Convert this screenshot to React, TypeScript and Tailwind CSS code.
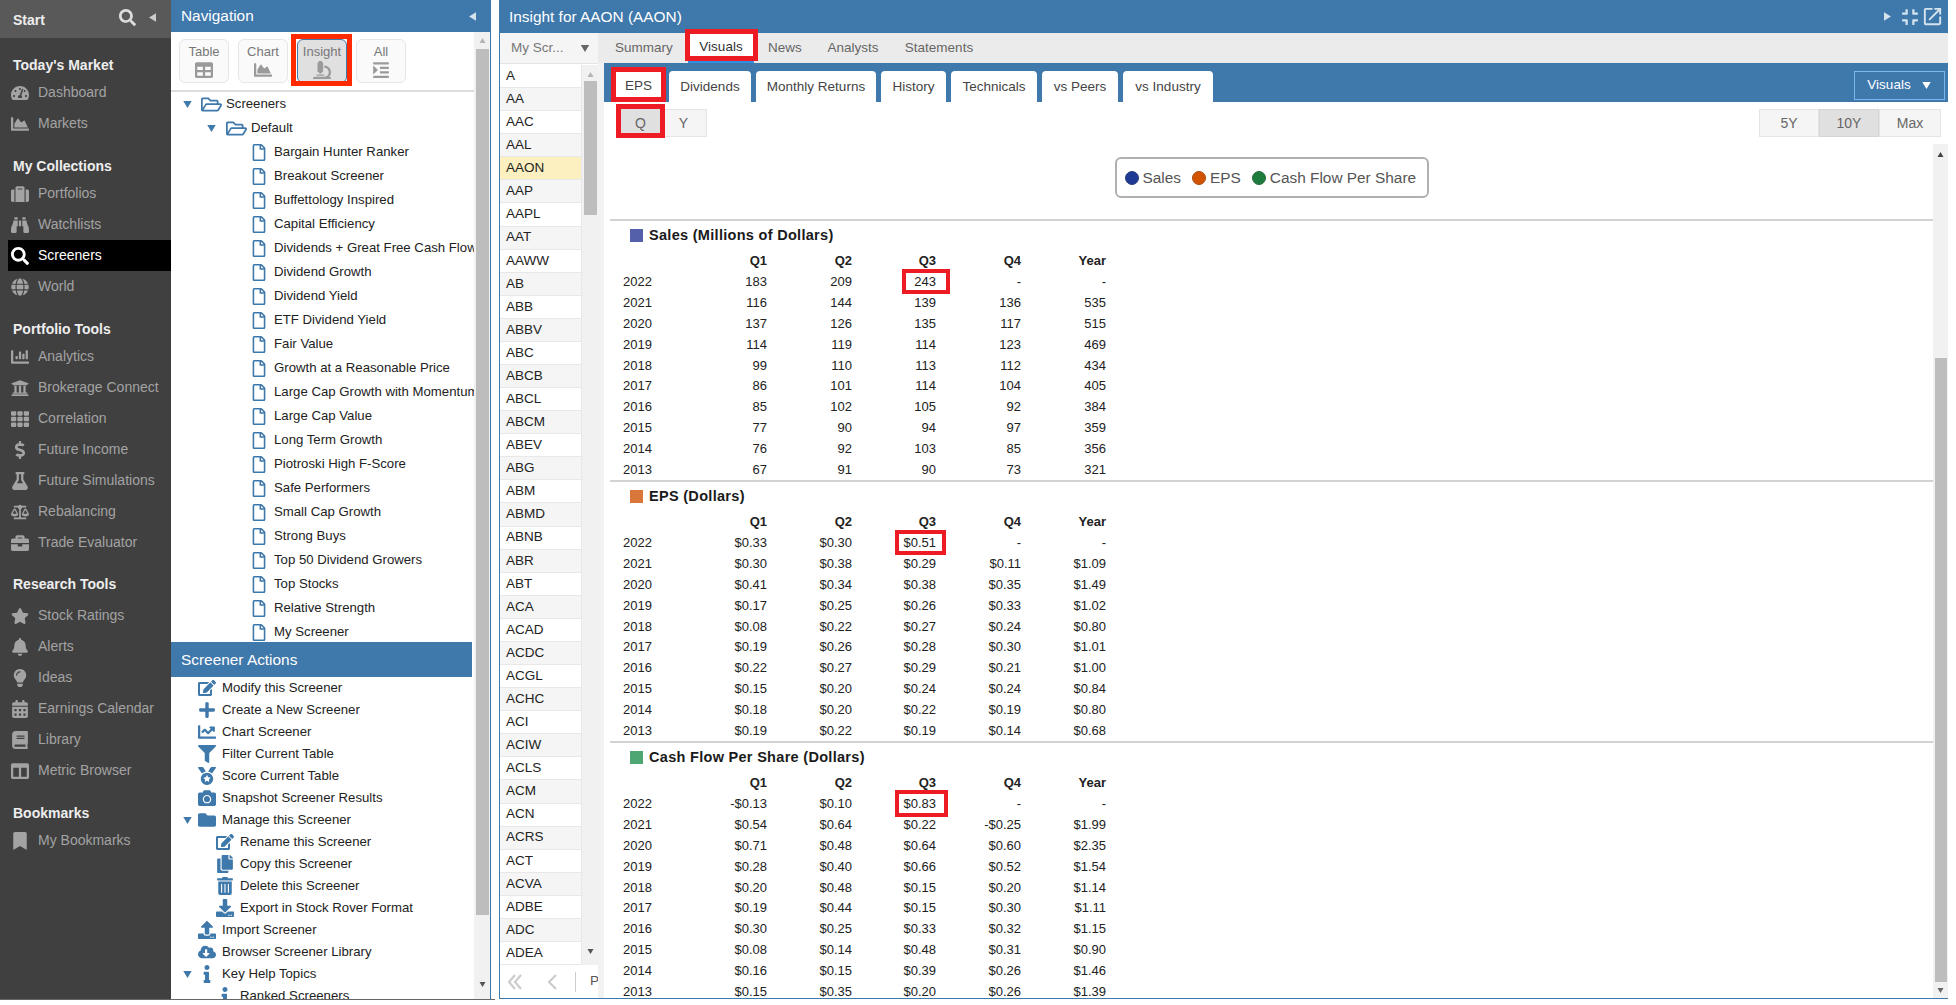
import React from "react";
import {
  FaTachometerAlt, FaChartArea, FaSuitcase, FaBinoculars, FaSearch, FaGlobe, FaChartBar, FaUniversity, FaTh,
  FaDollarSign, FaFlask, FaBalanceScale, FaBriefcase, FaStar, FaBell, FaLightbulb, FaCalendarAlt, FaBook, FaColumns,
  FaBookmark, FaEdit, FaPlus, FaChartLine, FaFilter, FaMedal, FaCamera, FaFolder, FaCopy, FaTrashAlt, FaDownload,
  FaUpload, FaCloudDownloadAlt, FaInfo, FaRegFolderOpen, FaRegFile, FaMicroscope, FaIndent, FaTable, FaCompress,
} from "react-icons/fa";
import { MdOpenInNew } from "react-icons/md";

type Ic = React.ComponentType<{ className?: string }>;

function Tri({ dir, className }: { dir: "up" | "down" | "left" | "right"; className?: string }) {
  const pts = { up: "0,10 6,0 12,10", down: "0,0 12,0 6,10", left: "10,0 10,12 0,6", right: "0,0 0,12 10,6" }[dir];
  const vb = dir === "up" || dir === "down" ? "0 0 12 10" : "0 0 10 12";
  return (
    <svg viewBox={vb} className={className} fill="currentColor">
      <polygon points={pts} />
    </svg>
  );
}

const sideSections: { title: string; cls: string; rows: [string, Ic, boolean?][] }[] = [
  { title: "Today's Market", cls: "mt-[15px] h-6", rows: [["Dashboard", FaTachometerAlt], ["Markets", FaChartArea]] },
  {
    title: "My Collections", cls: "mt-[15px] h-6",
    rows: [["Portfolios", FaSuitcase], ["Watchlists", FaBinoculars], ["Screeners", FaSearch, true], ["World", FaGlobe]],
  },
  {
    title: "Portfolio Tools", cls: "mt-[15px] h-6",
    rows: [["Analytics", FaChartBar], ["Brokerage Connect", FaUniversity], ["Correlation", FaTh], ["Future Income", FaDollarSign], ["Future Simulations", FaFlask], ["Rebalancing", FaBalanceScale], ["Trade Evaluator", FaBriefcase]],
  },
  {
    title: "Research Tools", cls: "mt-[14px] h-7",
    rows: [["Stock Ratings", FaStar], ["Alerts", FaBell], ["Ideas", FaLightbulb], ["Earnings Calendar", FaCalendarAlt], ["Library", FaBook], ["Metric Browser", FaColumns]],
  },
  { title: "Bookmarks", cls: "mt-[15px] h-6", rows: [["My Bookmarks", FaBookmark]] },
];

const leaves = ["Bargain Hunter Ranker", "Breakout Screener", "Buffettology Inspired", "Capital Efficiency", "Dividends + Great Free Cash Flow", "Dividend Growth", "Dividend Yield", "ETF Dividend Yield", "Fair Value", "Growth at a Reasonable Price", "Large Cap Growth with Momentum", "Large Cap Value", "Long Term Growth", "Piotroski High F-Score", "Safe Performers", "Small Cap Growth", "Strong Buys", "Top 50 Dividend Growers", "Top Stocks", "Relative Strength", "My Screener"];

const actions: { t: string; I: Ic; sub?: boolean; caret?: boolean; ic?: string }[] = [
  { t: "Modify this Screener", I: FaEdit },
  { t: "Create a New Screener", I: FaPlus },
  { t: "Chart Screener", I: FaChartLine },
  { t: "Filter Current Table", I: FaFilter },
  { t: "Score Current Table", I: FaMedal },
  { t: "Snapshot Screener Results", I: FaCamera },
  { t: "Manage this Screener", I: FaFolder, caret: true },
  { t: "Rename this Screener", I: FaEdit, sub: true },
  { t: "Copy this Screener", I: FaCopy, sub: true },
  { t: "Delete this Screener", I: FaTrashAlt, sub: true },
  { t: "Export in Stock Rover Format", I: FaDownload, sub: true },
  { t: "Import Screener", I: FaUpload },
  { t: "Browser Screener Library", I: FaCloudDownloadAlt },
  { t: "Key Help Topics", I: FaInfo, caret: true },
  { t: "Ranked Screeners", I: FaInfo, sub: true },
];

const tickers = ["A", "AA", "AAC", "AAL", "AAON", "AAP", "AAPL", "AAT", "AAWW", "AB", "ABB", "ABBV", "ABC", "ABCB", "ABCL", "ABCM", "ABEV", "ABG", "ABM", "ABMD", "ABNB", "ABR", "ABT", "ACA", "ACAD", "ACDC", "ACGL", "ACHC", "ACI", "ACIW", "ACLS", "ACM", "ACN", "ACRS", "ACT", "ACVA", "ADBE", "ADC", "ADEA"];

const tabs: [string, string][] = [["EPS", "w-[51px]"], ["Dividends", "w-[82px]"], ["Monthly Returns", "w-[120px]"], ["History", "w-[65px]"], ["Technicals", "w-[86px]"], ["vs Peers", "w-[76px]"], ["vs Industry", "w-[90px]"]];

const years = [2022, 2021, 2020, 2019, 2018, 2017, 2016, 2015, 2014, 2013];

const sections: { title: string; sw: string; box: string; data: string[][] }[] = [
  {
    title: "Sales (Millions of Dollars)", sw: "bg-[#5560ab]", box: "left-[-12px] right-[-14px] top-[-5px] bottom-[-4px]",
    data: [["183", "209", "243", "-", "-"], ["116", "144", "139", "136", "535"], ["137", "126", "135", "117", "515"], ["114", "119", "114", "123", "469"], ["99", "110", "113", "112", "434"], ["86", "101", "114", "104", "405"], ["85", "102", "105", "92", "384"], ["77", "90", "94", "97", "359"], ["76", "92", "103", "85", "356"], ["67", "91", "90", "73", "321"]],
  },
  {
    title: "EPS (Dollars)", sw: "bg-[#d9773a]", box: "left-[-8px] right-[-10px] top-[-5px] bottom-[-4px]",
    data: [["$0.33", "$0.30", "$0.51", "-", "-"], ["$0.30", "$0.38", "$0.29", "$0.11", "$1.09"], ["$0.41", "$0.34", "$0.38", "$0.35", "$1.49"], ["$0.17", "$0.25", "$0.26", "$0.33", "$1.02"], ["$0.08", "$0.22", "$0.27", "$0.24", "$0.80"], ["$0.19", "$0.26", "$0.28", "$0.30", "$1.01"], ["$0.22", "$0.27", "$0.29", "$0.21", "$1.00"], ["$0.15", "$0.20", "$0.24", "$0.24", "$0.84"], ["$0.18", "$0.20", "$0.22", "$0.19", "$0.80"], ["$0.19", "$0.22", "$0.19", "$0.14", "$0.68"]],
  },
  {
    title: "Cash Flow Per Share (Dollars)", sw: "bg-[#4ea672]", box: "left-[-8px] right-[-12px] top-[-6px] bottom-[-5px]",
    data: [["-$0.13", "$0.10", "$0.83", "-", "-"], ["$0.54", "$0.64", "$0.22", "-$0.25", "$1.99"], ["$0.71", "$0.48", "$0.64", "$0.60", "$2.35"], ["$0.28", "$0.40", "$0.66", "$0.52", "$1.54"], ["$0.20", "$0.48", "$0.15", "$0.20", "$1.14"], ["$0.19", "$0.44", "$0.15", "$0.30", "$1.11"], ["$0.30", "$0.25", "$0.33", "$0.32", "$1.15"], ["$0.08", "$0.14", "$0.48", "$0.31", "$0.90"], ["$0.16", "$0.15", "$0.39", "$0.26", "$1.46"], ["$0.15", "$0.35", "$0.20", "$0.26", "$1.39"]],
  },
];

function Sidebar() {
  return (
    <aside className="w-[171px] shrink-0 bg-[#404040] flex flex-col">
      <div className="h-[38px] bg-[#595959] flex items-center pl-[13px] pr-[15px]">
        <span className="text-[14px] font-bold text-[#eeeeee] mt-[2px]">Start</span>
        <FaSearch className="ml-auto text-[#dddddd] w-[17px] h-[17px] -mt-[4px]" />
        <Tri dir="left" className="ml-[13px] w-[7px] h-[11px] text-[#cccccc] -mt-[4px]" />
      </div>
      {sideSections.map((s) => (
        <div key={s.title}>
          <div className={`${s.cls} pl-[13px] flex items-start text-[14px] font-bold text-[#eeeeee] leading-6`}>{s.title}</div>
          {s.rows.map(([t, I, active]) => (
            <div key={t} className={`h-[31px] flex items-center text-[14px] ${active ? "ml-[8px] pl-[3px] bg-black text-white" : "pl-[11px] text-[#a3a3a3]"}`}>
              <span className="w-[18px] flex justify-center shrink-0">
                <I className={`w-[18px] h-[18px] ${active ? "text-white" : "text-[#a3a3a3]"}`} />
              </span>
              <span className="ml-[9px] whitespace-nowrap">{t}</span>
            </div>
          ))}
        </div>
      ))}
    </aside>
  );
}

function NavButton({ label, I, active }: { label: string; I: Ic; active?: boolean }) {
  return (
    <div className={`relative w-[50px] h-[44px] rounded-md border flex flex-col items-center pt-[3px] text-[13px] leading-[18px] text-[#777777] ${active ? "bg-[#e0e0e0] border-[#3f78ab]" : "bg-[#fafafa] border-[#e6e6e6]"}`}>
      {active && <span className="absolute left-[-7px] right-[-6px] top-[-6px] bottom-[-4px] border-[5px] border-[#ff2a00]" />}
      <span>{label}</span>
      <I className="w-[18px] h-[18px] text-[#9a9a9a]" />
    </div>
  );
}

function Navigation() {
  return (
    <section className="w-[320px] shrink-0 flex flex-col border-r border-[#3f78ab]">
      <div className="h-[32px] shrink-0 bg-[#3f78ab] flex items-center pl-[10px] pr-[14px] text-[15.4px] text-white">
        <span>Navigation</span>
        <Tri dir="left" className="ml-auto w-[7px] h-[11px] text-[#d5e3ef]" />
      </div>
      <div className="flex-1 flex min-h-0">
        <div className="w-[303px] shrink-0 flex flex-col min-h-0">
          <div className="h-[60px] shrink-0 border-b-2 border-[#dddddd] flex items-start pt-[7px] pl-[8px] gap-[9px]">
            <NavButton label="Table" I={FaTable} />
            <NavButton label="Chart" I={FaChartArea} />
            <NavButton label="Insight" I={FaMicroscope} active />
            <NavButton label="All" I={FaIndent} />
          </div>
          <div className="h-[550px] shrink-0 overflow-hidden text-[13.2px] text-[#222222]">
            <div className="h-6 flex items-center pl-[11px]">
              <Tri dir="down" className="w-[11px] h-[7px] text-[#3f78ab]" />
              <FaRegFolderOpen className="ml-[8px] w-[21px] h-[19px] text-[#3f78ab]" />
              <span className="ml-[4px]">Screeners</span>
            </div>
            <div className="h-6 flex items-center pl-[35px]">
              <Tri dir="down" className="w-[11px] h-[7px] text-[#3f78ab]" />
              <FaRegFolderOpen className="ml-[9px] w-[21px] h-[19px] text-[#3f78ab]" />
              <span className="ml-[4px]">Default</span>
            </div>
            {leaves.map((l) => (
              <div key={l} className="h-6 flex items-center pl-[81px] whitespace-nowrap">
                <FaRegFile className="w-[14px] h-[17px] shrink-0 text-[#3f78ab]" />
                <span className="ml-[8px]">{l}</span>
              </div>
            ))}
          </div>
          <div className="h-[35px] w-[301px] shrink-0 bg-[#3f78ab] text-white text-[15.4px] flex items-center pl-[10px]">Screener Actions</div>
          <div className="flex-1 min-h-0 overflow-hidden text-[13.2px] text-[#222222]">
            {actions.map((a) => (
              <div key={a.t} className={`h-[22px] flex items-center whitespace-nowrap ${a.sub ? "pl-[44px]" : a.caret ? "pl-[11px]" : "pl-[26px]"}`}>
                {a.caret && <Tri dir="down" className="w-[11px] h-[7px] text-[#3f78ab] mr-[4px]" />}
                <span className="w-[20px] flex justify-center shrink-0">
                  <a.I className="w-[18px] h-[18px] text-[#3f78ab]" />
                </span>
                <span className="ml-[5px]">{a.t}</span>
              </div>
            ))}
          </div>
        </div>
        <div className="w-[16px] shrink-0 bg-[#f1f1f1] flex flex-col items-center pt-[6px]">
          <Tri dir="up" className="w-[9px] h-[5px] text-[#b5b5b5]" />
          <div className="w-[13px] h-[866px] bg-[#bdbdbd] mt-[6px]" />
          <Tri dir="down" className="w-[9px] h-[5px] text-[#555555] mt-[67px]" />
        </div>
      </div>
    </section>
  );
}

function TickerList() {
  return (
    <div className="w-[98px] shrink-0 flex flex-col bg-white">
      <div className="h-[31px] shrink-0 bg-[#f5f5f5] border-b border-[#e5e5e5] flex items-center pl-[11px] pr-[7px] text-[13.5px] text-[#777777]">
        <span>My Scr...</span>
        <Tri dir="down" className="ml-auto w-[12px] h-[7px] text-[#666666]" />
      </div>
      <div className="h-[900px] shrink-0 flex mt-[1px]">
        <div className="w-[82px] shrink-0">
          {tickers.map((t, i) => (
            <div key={t} className={`h-[23.08px] flex items-center pl-[6px] text-[13.5px] text-[#222222] border-b border-r border-[#e8e8e8] ${t === "AAON" ? "bg-[#fdf0c0]" : i % 2 ? "bg-[#f5f5f5]" : "bg-white"}`}>{t}</div>
          ))}
        </div>
        <div className="w-[16px] shrink-0 bg-[#f1f1f1] flex flex-col items-center pt-[7px]">
          <Tri dir="up" className="w-[9px] h-[5px] text-[#b5b5b5]" />
          <div className="w-[13px] h-[134px] bg-[#bdbdbd] mt-[4px]" />
          <Tri dir="down" className="w-[9px] h-[5px] text-[#555555] mt-[734px]" />
        </div>
      </div>
      <div className="flex-1 min-h-0 flex items-center pl-[8px] text-[#cccccc] overflow-hidden whitespace-nowrap">
        <svg viewBox="0 0 14 16" className="w-[14px] h-[16px] shrink-0" fill="none" stroke="currentColor" strokeWidth="2.2">
          <polyline points="7,1 1,8 7,15" />
          <polyline points="13,1 7,8 13,15" />
        </svg>
        <svg viewBox="0 0 9 16" className="ml-[26px] w-[9px] h-[16px] shrink-0" fill="none" stroke="currentColor" strokeWidth="2.2">
          <polyline points="8,1 1,8 8,15" />
        </svg>
        <span className="ml-[18px] w-px h-[20px] shrink-0 bg-[#cccccc]" />
        <span className="ml-[14px] text-[13.5px] text-[#555555]">Page</span>
      </div>
    </div>
  );
}

function DataSection({ s }: { s: (typeof sections)[number] }) {
  const cols = ["Q1", "Q2", "Q3", "Q4", "Year"];
  return (
    <div className="h-[261px] border-t-2 border-[#d2d2d2] ml-[6px]">
      <div className="h-[29px] flex items-center pl-[20px]">
        <span className={`w-[13px] h-[13px] ${s.sw}`} />
        <span className="ml-[6px] text-[14.5px] font-bold text-[#1a1a1a] tracking-[0.3px]">{s.title}</span>
      </div>
      <div className="grid grid-cols-[60px_84px_85px_84px_85px_85px] pl-[13px] text-[13px] text-[#222222]">
        <div className="h-[21.8px]" />
        {cols.map((c) => (
          <div key={c} className="h-[21.8px] flex items-center justify-end font-bold">{c}</div>
        ))}
        {years.map((y, r) => (
          <React.Fragment key={y}>
            <div className="h-[20.8px] flex items-center">{y}</div>
            {s.data[r].map((v, c) => (
              <div key={c} className="h-[20.8px] flex items-center justify-end">
                {r === 0 && c === 2 ? (
                  <span className="relative leading-4">
                    {v}
                    <span className={`absolute border-4 border-[#ed1c24] ${s.box}`} />
                  </span>
                ) : (
                  v
                )}
              </div>
            ))}
          </React.Fragment>
        ))}
      </div>
    </div>
  );
}

function Main() {
  return (
    <div className="flex-1 min-w-0 flex flex-col">
      <div className="h-[30px] shrink-0 bg-[#ebebeb] flex items-stretch pl-[2px] text-[13.5px] text-[#666666]">
        <div className="w-[88px] flex items-center justify-center">Summary</div>
        <div className="relative w-[66px] bg-white border-b-2 border-[#2e8fe6] flex items-center justify-center text-[#333333]">
          Visuals
          <span className="absolute left-[-3px] right-[-4px] top-[-4px] bottom-0 border-[5px] border-[#ed1c24]" />
        </div>
        <div className="w-[62px] flex items-center justify-center">News</div>
        <div className="w-[74px] flex items-center justify-center">Analysts</div>
        <div className="w-[98px] flex items-center justify-center">Statements</div>
      </div>
      <div className="flex-1 min-h-0 flex">
        <div className="w-[6px] shrink-0 bg-[#f2f2f2]" />
        <div className="flex-1 min-w-0 flex flex-col">
          <div className="h-[39px] shrink-0 bg-[#3f78ab] flex items-end pl-[9px] gap-[5px] text-[13.5px] text-[#444444]">
            {tabs.map(([t, w]) => (
              <div key={t} className={`relative ${w} h-[31px] pt-[1px] bg-white rounded-t flex items-center justify-center ${t === "EPS" ? "border-b-2 border-[#2e8fe6]" : ""}`}>
                {t}
                {t === "EPS" && <span className="absolute left-[-2px] right-[-2px] top-[-4px] bottom-[-2px] border-[5px] border-[#ed1c24]" />}
              </div>
            ))}
            <div className="ml-auto mr-[3px] mb-[2px] w-[91px] h-[29px] border border-[#7ab8f0] flex items-center justify-center gap-[10px] text-white">
              Visuals
              <Tri dir="down" className="w-[11px] h-[7px] text-white" />
            </div>
          </div>
          <div className="h-[42px] shrink-0 flex items-start pt-[7px] pl-[17px] pr-[7px] text-[14px] text-[#666666]">
            <div className="relative w-[39px] h-[28px] bg-[#e0e0e0] flex items-center justify-center">
              Q
              <span className="absolute left-[-5px] right-[-5px] top-[-5px] bottom-[-1px] border-[5px] border-[#ed1c24]" />
            </div>
            <div className="w-[47px] h-[28px] bg-[#f5f5f5] border border-[#e5e5e5] flex items-center justify-center">Y</div>
            <div className="ml-auto flex">
              <div className="w-[60px] h-[28px] bg-[#f5f5f5] border border-[#e5e5e5] flex items-center justify-center">5Y</div>
              <div className="w-[60px] h-[28px] bg-[#e0e0e0] border border-[#d5d5d5] flex items-center justify-center">10Y</div>
              <div className="w-[62px] h-[28px] bg-[#f5f5f5] border border-[#e5e5e5] flex items-center justify-center">Max</div>
            </div>
          </div>
          <div className="flex-1 min-h-0 flex">
            <div className="flex-1 min-w-0 overflow-hidden">
              <div className="h-[75px] flex justify-center items-start pt-[13px] pl-[6px]">
                <div className="h-[41px] w-[314px] border-2 border-[#b0b0b0] rounded-md flex items-center pl-[8px] text-[15.4px] text-[#555555]">
                  <span className="w-[14px] h-[14px] rounded-full bg-[#1f3a93] border border-[#2a3f80]" />
                  <span className="ml-[4px]">Sales</span>
                  <span className="ml-[11px] w-[14px] h-[14px] rounded-full bg-[#d35400] border border-[#a84a10]" />
                  <span className="ml-[4px]">EPS</span>
                  <span className="ml-[11px] w-[14px] h-[14px] rounded-full bg-[#1e7b3e] border border-[#2a6a40]" />
                  <span className="ml-[4px]">Cash Flow Per Share</span>
                </div>
              </div>
              {sections.map((s) => (
                <DataSection key={s.title} s={s} />
              ))}
            </div>
            <div className="w-[15px] shrink-0 bg-[#f1f1f1] flex flex-col items-center pt-[8px]">
              <Tri dir="up" className="w-[9px] h-[5px] text-[#444444]" />
              <div className="w-[12px] h-[624px] bg-[#bdbdbd] mt-[201px]" />
              <Tri dir="down" className="w-[9px] h-[5px] text-[#666666] mt-[6px]" />
            </div>
          </div>
        </div>
      </div>
    </div>
  );
}

export default function App() {
  return (
    <div className="w-[1956px] h-[1005px] bg-white overflow-hidden font-['Liberation_Sans',Arial,sans-serif]">
      <div className="h-[999px] flex">
        <Sidebar />
        <Navigation />
        <div className="w-[8px] shrink-0" />
        <section className="flex-1 min-w-0 flex flex-col border-l border-b border-[#3f78ab]">
          <div className="h-[33px] shrink-0 bg-[#3f78ab] flex items-center pl-[9px] pr-[4px] text-[15.4px] text-white">
            <span>Insight for AAON (AAON)</span>
            <Tri dir="right" className="ml-auto w-[7px] h-[11px] text-[#d5e3ef]" />
            <FaCompress className="ml-[10px] w-[18px] h-[18px] text-[#d5e3ef]" />
            <MdOpenInNew className="ml-[2px] w-[23px] h-[23px] text-[#d5e3ef]" />
          </div>
          <div className="flex-1 min-h-0 flex">
            <TickerList />
            <Main />
          </div>
        </section>
        <div className="w-[8px] shrink-0" />
      </div>
      <div className="w-[495px] h-px bg-[#666666]" />
    </div>
  );
}
